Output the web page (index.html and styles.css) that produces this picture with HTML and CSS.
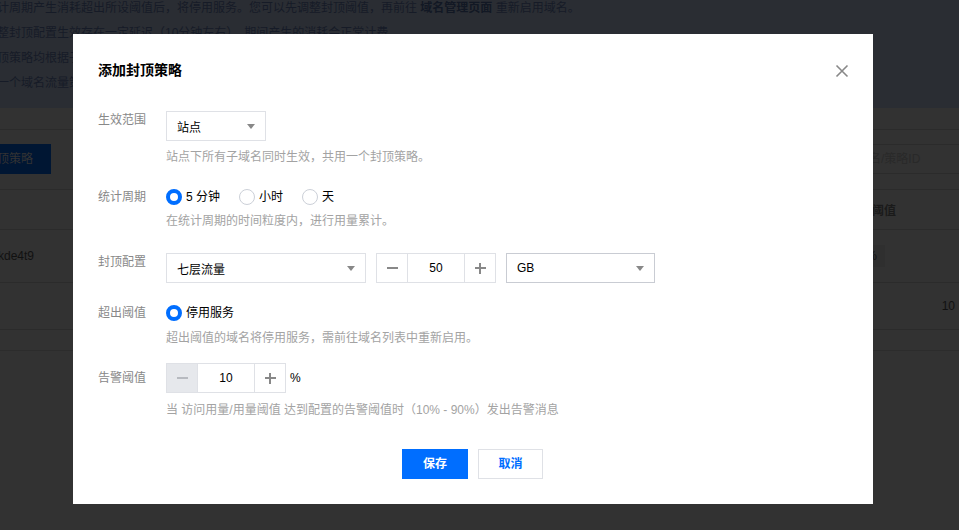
FILE: index.html
```html
<!DOCTYPE html>
<html lang="zh-CN">
<head>
<meta charset="utf-8">
<title>添加封顶策略</title>
<link rel="stylesheet" href="styles.css">
</head>
<body>
<div class="page">
  <div class="notice">
    <p class="notice-line first">计周期产生消耗超出所设阈值后，将停用服务。您可以先调整封顶阈值，再前往 <b>域名管理页面</b> 重新启用域名。</p>
    <p class="notice-line">整封顶配置生效存在一定延迟（10分钟左右），期间产生的消耗会正常计费。</p>
    <p class="notice-line">顶策略均根据子域名维度统计用量，超出阈值后停用对应域名。</p>
    <p class="notice-line">一个域名流量策略仅可配置一条。</p>
  </div>
  <div class="toolbar">
    <span class="tb-btn">顶策略</span>
    <span class="tb-search">域名/策略ID</span>
  </div>
  <div class="t-head"><span class="th-right">阈值</span></div>
  <div class="t-row">
    <span class="cell-id">kde4t9</span>
    <span class="cell-tag">%</span>
  </div>
  <div class="t-row short"><span class="cell-num">10</span></div>
  <div class="t-foot"></div>
</div>

<div class="modal">
  <div class="modal-head">
    <h2 class="modal-title">添加封顶策略</h2>
    <span class="close">
      <svg width="14" height="14" viewBox="0 0 14 14"><path d="M1.5 1.5 L12.5 12.5 M12.5 1.5 L1.5 12.5" stroke="#888" stroke-width="1.6" fill="none"/></svg>
    </span>
  </div>

  <div class="form">
    <div class="form-item">
      <div class="label">生效范围</div>
      <div class="field">
        <div class="select w100"><span>站点</span><i class="arrow"></i></div>
        <div class="help">站点下所有子域名同时生效，共用一个封顶策略。</div>
      </div>
    </div>

    <div class="form-item r2">
      <div class="label">统计周期</div>
      <div class="field">
        <div class="radios">
          <span class="radio checked"><i></i>5 分钟</span>
          <span class="radio"><i></i>小时</span>
          <span class="radio"><i></i>天</span>
        </div>
        <div class="help tight">在统计周期的时间粒度内，进行用量累计。</div>
      </div>
    </div>

    <div class="form-item r3">
      <div class="label">封顶配置</div>
      <div class="field row">
        <div class="select w200"><span>七层流量</span><i class="arrow"></i></div>
        <div class="stepper">
          <span class="step"><i class="minus"></i></span>
          <span class="step-val">50</span>
          <span class="step"><i class="minus"></i><i class="vbar"></i></span>
        </div>
        <div class="select w149 focus"><span>GB</span><i class="arrow"></i></div>
      </div>
    </div>

    <div class="form-item r4">
      <div class="label">超出阈值</div>
      <div class="field">
        <div class="radios">
          <span class="radio checked"><i></i>停用服务</span>
        </div>
        <div class="help">超出阈值的域名将停用服务，需前往域名列表中重新启用。</div>
      </div>
    </div>

    <div class="form-item r5">
      <div class="label tall">告警阈值</div>
      <div class="field">
        <div class="row">
          <div class="stepper first">
            <span class="step disabled"><i class="minus"></i></span>
            <span class="step-val">10</span>
            <span class="step"><i class="minus"></i><i class="vbar"></i></span>
          </div>
          <span class="unit">%</span>
        </div>
        <div class="help loose">当 访问用量/用量阈值 达到配置的告警阈值时（10% - 90%）发出告警消息</div>
      </div>
    </div>
  </div>

  <div class="footer">
    <span class="btn primary">保存</span>
    <span class="btn">取消</span>
  </div>
</div>
</body>
</html>
```

FILE: styles.css
```css
* { box-sizing: border-box; }
html, body { margin: 0; padding: 0; }
body {
  width: 959px;
  height: 530px;
  overflow: hidden;
  background: #323232;
  font-family: "Liberation Sans", "Noto Sans CJK SC", sans-serif;
  font-size: 12px;
}
p { margin: 0; }

/* masked page behind the dialog */
.page { height: 530px; overflow: hidden; }
.notice {
  height: 108px;
  background: #2a2d33;
  overflow: hidden;
  color: #161b27;
  font-size: 12px;
}
.notice-line { line-height: 25px; white-space: nowrap; margin-left: -3px; }
.notice-line.first { margin-top: -4px; }
.notice-line b { font-weight: bold; color: #121824; }

.toolbar {
  margin-top: 21px;
  height: 61px;
  border-top: 1px solid #2b2b2b;
  border-bottom: 1px solid #2b2b2b;
  display: flex;
  align-items: center;
  justify-content: space-between;
  padding-bottom: 1px;
}
.tb-btn {
  width: 51px;
  height: 30px;
  background: #001633;
  color: #333;
  line-height: 30px;
  font-size: 12px;
  text-indent: -3px;
  overflow: hidden;
  white-space: nowrap;
}
.tb-search {
  height: 30px;
  width: 134px;
  border: 1px solid #2b2b2b;
  line-height: 28px;
  color: #292929;
  padding-left: 11px;
  margin-right: -20px;
  font-size: 12px;
  white-space: nowrap;
}
.t-head {
  height: 40px;
  border-bottom: 1px solid #2b2b2b;
  display: flex;
  align-items: center;
  justify-content: flex-end;
  padding-right: 63px;
}
.th-right { color: #1a1a1a; font-weight: bold; font-size: 12px; }
.t-row {
  height: 53px;
  border-bottom: 1px solid #2b2b2b;
  display: flex;
  align-items: center;
  justify-content: space-between;
  color: #111;
}
.t-row.short { height: 47px; justify-content: flex-end; }
.cell-id { margin-left: -2px; font-size: 12px; }
.cell-tag {
  background: #2f2f2f;
  height: 22px;
  line-height: 22px;
  padding: 0 8px 0 0;
  margin-right: 74px;
  font-size: 12px;
}
.cell-num { margin-right: 4px; font-size: 12px; }
.t-foot { height: 21px; border-bottom: 1px solid #2c2c2c; }

/* dialog */
.modal {
  position: fixed;
  left: 73px;
  top: 34px;
  width: 800px;
  height: 470px;
  background: #fff;
  padding: 26px 25px 25px;
}
.modal-head { height: 20px; }
.modal-title {
  margin: 0;
  font-size: 14px;
  line-height: 20px;
  font-weight: bold;
  color: #000;
}
.close {
  position: absolute;
  right: 24px;
  top: 30px;
  width: 14px;
  height: 14px;
  display: block;
}
.close svg { display: block; }

.form { margin-top: 31px; }
.form-item { display: flex; }
.form-item.r2 { margin-top: 22px; }
.form-item.r3 { margin-top: 23px; }
.form-item.r4 { margin-top: 21px; }
.form-item.r5 { margin-top: 16px; }
.label {
  width: 68px;
  flex: none;
  color: #888;
  font-size: 12px;
  line-height: 18px;
}
.label.tall { line-height: 30px; }
.field { display: flex; flex-direction: column; }
.row { display: flex; flex-direction: row; align-items: center; }
.help {
  margin-top: 7px;
  color: #a3a3a3;
  font-size: 12px;
  line-height: 18px;
  white-space: nowrap;
}
.help.tight { margin-top: 6px; }
.help.loose { margin-top: 8px; }

.select {
  height: 30px;
  border: 1px solid #dfe1e6;
  display: flex;
  align-items: center;
  justify-content: space-between;
  padding: 0 10px 0 10px;
  color: #000;
  font-size: 12px;
}
.select.w100 { width: 100px; }
.select.w200 { width: 200px; }
.select.w149 { width: 149px; margin-left: 10px; }
.select.focus { border-color: #c9ccd3; }
.arrow {
  width: 0;
  height: 0;
  border-left: 4.5px solid transparent;
  border-right: 4.5px solid transparent;
  border-top: 5px solid #888;
}

.radios { display: flex; align-items: center; height: 18px; }
.radio {
  display: flex;
  align-items: center;
  color: #000;
  font-size: 12px;
  line-height: 18px;
  margin-right: 19px;
}
.radio i {
  width: 16px;
  height: 16px;
  border-radius: 50%;
  border: 1px solid #ccd0d8;
  background: #fff;
  margin-right: 4px;
}
.radio.checked i { border: 4.5px solid #006eff; }

.stepper {
  display: flex;
  height: 30px;
  border: 1px solid #dfe1e6;
  margin-left: 10px;
}
.stepper.first { margin-left: 0; }
.step {
  width: 30px;
  position: relative;
  display: flex;
  align-items: center;
  justify-content: center;
  background: #fff;
}
.step.disabled { background: #e6e8ec; }
.step .minus {
  display: block;
  width: 11px;
  height: 1.6px;
  background: #888;
}
.step.disabled .minus { background: #b7bac0; }
.step .vbar {
  position: absolute;
  left: 50%;
  top: 50%;
  width: 1.6px;
  height: 11px;
  margin-left: -0.8px;
  margin-top: -5.5px;
  background: #888;
}
.step-val {
  width: 58px;
  border-left: 1px solid #dfe1e6;
  border-right: 1px solid #dfe1e6;
  text-align: center;
  line-height: 28px;
  color: #000;
  font-size: 12px;
}
.unit { margin-left: 4px; color: #000; font-size: 12px; }

.footer {
  margin-top: 30px;
  display: flex;
  justify-content: center;
  gap: 10px;
  padding-right: 1px;
}
.btn {
  width: 65px;
  height: 30px;
  border: 1px solid #dfe1e6;
  background: #fff;
  color: #006eff;
  font-weight: bold;
  font-size: 12px;
  line-height: 28px;
  text-align: center;
}
.btn.primary {
  width: 66px;
  background: #006eff;
  border-color: #006eff;
  color: #fff;
}
```
